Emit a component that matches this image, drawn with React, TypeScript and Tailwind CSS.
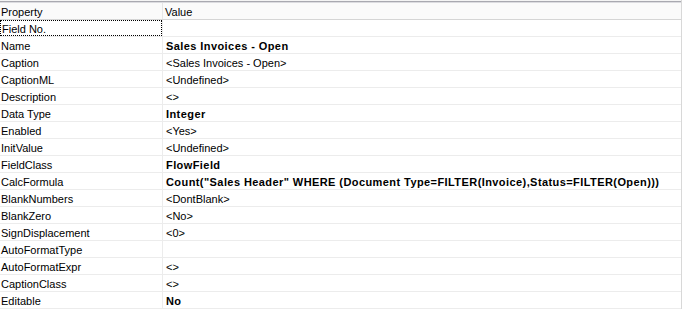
import React from 'react';

type Prop = { name: string; value: string; bold?: boolean };

const props: Prop[] = [
  { name: 'Field No.', value: '' },
  { name: 'Name', value: 'Sales Invoices - Open', bold: true },
  { name: 'Caption', value: '<Sales Invoices - Open>' },
  { name: 'CaptionML', value: '<Undefined>' },
  { name: 'Description', value: '<>' },
  { name: 'Data Type', value: 'Integer', bold: true },
  { name: 'Enabled', value: '<Yes>' },
  { name: 'InitValue', value: '<Undefined>' },
  { name: 'FieldClass', value: 'FlowField', bold: true },
  {
    name: 'CalcFormula',
    value: 'Count("Sales Header" WHERE (Document Type=FILTER(Invoice),Status=FILTER(Open)))',
    bold: true,
  },
  { name: 'BlankNumbers', value: '<DontBlank>' },
  { name: 'BlankZero', value: '<No>' },
  { name: 'SignDisplacement', value: '<0>' },
  { name: 'AutoFormatType', value: '' },
  { name: 'AutoFormatExpr', value: '<>' },
  { name: 'CaptionClass', value: '<>' },
  { name: 'Editable', value: 'No', bold: true },
];

const App: React.FC = () => {
  return (
    <div className="w-[682px] h-[309px] overflow-hidden bg-white text-black text-[11px] leading-[18px] font-['Liberation_Sans',Arial,sans-serif] border-r border-[#d8d8d8]">
      <div className="h-[1px] bg-[#f4f4f4]" />
      <div className="h-[1px] bg-[#a9a9b0]" />
      <div className="h-[1px] bg-[#dcdce0]" />

      {/* column header */}
      <div className="flex h-[17px] overflow-hidden bg-[#fafafa] border-b border-[#d5d5d5]">
        <div className="w-[163px] shrink-0 pl-[1px] border-r border-[#e6e6e6]">Property</div>
        <div className="flex-1 pl-[2px]">Value</div>
      </div>

      {props.map((p, i) => (
        <div key={p.name} className="flex h-[17px] overflow-hidden border-b border-[#ececec]">
          <div className="w-[163px] shrink-0 border-r border-[#ececec]">
            <div
              className={`h-[16px] pl-[1px] whitespace-nowrap ${
                i === 0 ? 'border border-dotted border-black leading-[16px]' : ''
              }`}
            >
              {p.name}
            </div>
          </div>
          <div
            className={`flex-1 pl-[3px] whitespace-nowrap ${
              p.bold ? 'font-bold tracking-[0.42px]' : ''
            }`}
          >
            {p.value}
          </div>
        </div>
      ))}
    </div>
  );
};

export default App;
